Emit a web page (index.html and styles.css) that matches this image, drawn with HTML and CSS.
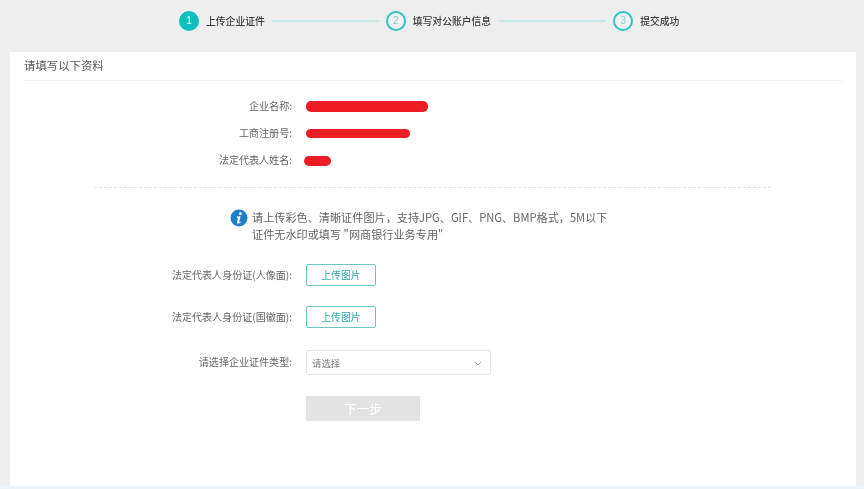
FILE: index.html
```html
<!DOCTYPE html>
<html lang="zh">
<head>
<meta charset="utf-8">
<title>填写资料</title>
<link rel="stylesheet" href="styles.css">
</head>
<body>
<div class="page">
  <header class="steps">
    <div class="step step-active"><span class="num">1</span><span class="step-text">上传企业证件</span></div>
    <span class="step-line line-a"></span>
    <div class="step"><span class="num">2</span><span class="step-text">填写对公账户信息</span></div>
    <span class="step-line line-b"></span>
    <div class="step"><span class="num">3</span><span class="step-text">提交成功</span></div>
  </header>
  <main class="card">
    <h1 class="card-title">请填写以下资料</h1>
    <section class="info">
      <div class="info-row"><span class="label">企业名称:</span><span class="mark mark-a"></span></div>
      <div class="info-row"><span class="label">工商注册号:</span><span class="mark mark-b"></span></div>
      <div class="info-row"><span class="label">法定代表人姓名:</span><span class="mark mark-c"></span></div>
    </section>
    <div class="divider"></div>
    <div class="notice">
      <svg class="notice-icon" viewBox="0 0 18 18" width="18" height="18" aria-hidden="true">
        <circle cx="9" cy="9" r="8.5" fill="#1f7fc4"/>
        <circle cx="10.4" cy="4.7" r="1.4" fill="#fff"/>
        <path d="M7 7.6 L10.6 7.2 L9.2 12.6 Q9 13.4 9.9 13 L10.8 12.5 L10.9 13.2 Q9.4 14.6 8 14.6 Q6.7 14.6 7 13.2 L8 9 L7 8.8 Z" fill="#fff"/>
      </svg>
      <p class="notice-text">请上传彩色、清晰证件图片，支持JPG、GIF、PNG、BMP格式，5M以下<br>证件无水印或填写 "网商银行业务专用"</p>
    </div>
    <form class="form">
      <div class="form-row row-upload"><span class="label">法定代表人身份证(人像面):</span><button type="button" class="upload">上传图片</button></div>
      <div class="form-row row-upload"><span class="label">法定代表人身份证(国徽面):</span><button type="button" class="upload">上传图片</button></div>
      <div class="form-row row-select"><span class="label">请选择企业证件类型:</span>
        <div class="select"><span class="select-text">请选择</span>
          <svg class="chev" viewBox="0 0 8 5" width="8" height="5" aria-hidden="true"><path d="M1 1 L4 4 L7 1" fill="none" stroke="#aaa" stroke-width="1"/></svg>
        </div>
      </div>
      <div class="form-row row-next"><span class="label"></span><button type="button" class="next">下一步</button></div>
    </form>
  </main>
</div>
</body>
</html>
```
FILE: styles.css
```css
* { box-sizing: border-box; }
html, body { margin: 0; padding: 0; height: 100%; }
body {
  background: #eef3fa;
  font-family: "Noto Sans CJK SC", "Liberation Sans", sans-serif;
  color: #666;
  overflow: hidden;
}
.page {
  width: 864px;
  height: 486px;
  background: #eee;
  display: flex;
  flex-direction: column;
  filter: blur(0.6px);
}
.steps {
  height: 52px;
  padding: 0 0 11px 179px;
  display: flex;
  align-items: center;
  flex: none;
}
.step { display: flex; align-items: center; gap: 7px; }
.num {
  width: 20px;
  height: 20px;
  border-radius: 50%;
  border: 2px solid #2cc4c4;
  color: #7fcfcf;
  font: 10px "Liberation Sans", sans-serif;
  display: flex;
  align-items: center;
  justify-content: center;
  background: #f2f2f2;
}
.step-active .num { background: #0fbfbf; border-color: #0fbfbf; color: #fff; }
.step-text { font-size: 9.8px; font-weight: 500; color: #3d3d3d; line-height: 14px; white-space: nowrap; }
.step-line { height: 2px; width: 107px; background: #c4e8e8; flex: none; }
.line-a { margin: 0 7px; }
.line-b { margin: 0 7px 0 8px; }
.card {
  flex: 1;
  margin: 0 8px 0 10px;
  background: #fff;
  display: flex;
  flex-direction: column;
}
.card-title {
  margin: 0 14px;
  height: 29px;
  border-bottom: 1px solid #f2f2f2;
  font-size: 11.4px;
  font-weight: 400;
  line-height: 27px;
  color: #555;
}
.info { margin-top: 12px; display: flex; flex-direction: column; }
.info-row { height: 27px; display: flex; align-items: center; }
.label {
  width: 282px;
  padding-bottom: 2px;
  text-align: right;
  font-size: 10.05px;
  color: #666;
  white-space: nowrap;
  flex: none;
}
.mark { display: block; background: #ee1c25; border-radius: 5px; margin-left: 14px; }
.mark-a { width: 122px; height: 11px; }
.mark-b { width: 104px; height: 9px; }
.mark-c { width: 27px; height: 10px; margin-left: 12px; }
.divider { margin: 13px 85px 0 84px; border-top: 1px dashed #e2e2e2; }
.notice { margin: 21px 0 0 220px; display: flex; align-items: flex-start; gap: 4px; }
.notice-icon { flex: none; }
.notice-text { margin: 0; font-size: 11.15px; line-height: 17px; color: #666; white-space: nowrap; }
.form { display: flex; flex-direction: column; margin-top: 21px; }
.form-row { display: flex; align-items: center; }
.form-row .label { margin-right: 14px; }
.row-upload { height: 22px; margin-bottom: 20px; }
.upload {
  width: 70px;
  height: 22px;
  padding: 0;
  background: #fff;
  border: 1px solid #6cc5c5;
  border-radius: 2px;
  color: #2ea9a9;
  font: 9.9px "Noto Sans CJK SC", sans-serif;
}
.row-select { height: 25px; margin-top: 2px; }
.select {
  width: 185px;
  height: 25px;
  border: 1px solid #e6e6e6;
  border-radius: 2px;
  padding: 1px 8px 0 5px;
  display: flex;
  align-items: center;
  justify-content: space-between;
}
.select-text { font-size: 9.4px; color: #777; }
.row-next { margin-top: 21px; }
.next {
  width: 114px;
  height: 25px;
  padding: 0;
  border: 0;
  background: #e3e3e3;
  color: #fff;
  font: 12.5px "Noto Sans CJK SC", sans-serif;
}
```
